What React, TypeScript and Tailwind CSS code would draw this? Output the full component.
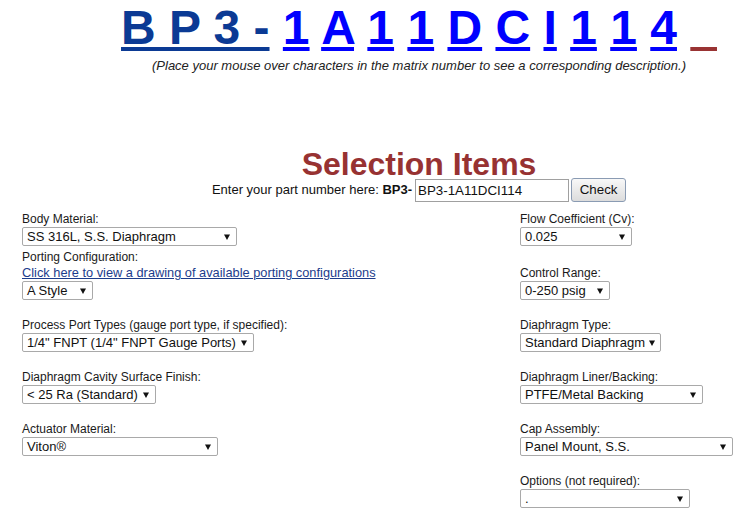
import React from "react";

const matrix = ["1", "A", "1", "1", "D", "C", "I", "1", "1", "4"];

interface PickProps {
  label: string;
  value: string;
  width: string;
  children?: React.ReactNode;
}

const Arrow = () => (
  <svg width="6" height="6" viewBox="0 0 6 6" className="ml-[4px] shrink-0">
    <polygon points="0,0.5 6,0.5 3,6" fill="#111" />
  </svg>
);

const Pick = ({ label, value, width, children }: PickProps) => {
  return (
    <div>
      <span className="block text-[12px] leading-[16px] text-[#1a1a1a]">{label}</span>
      {children}
      <div
        className={`${width} flex h-[19px] items-center justify-between rounded-[2px] border border-[#a9a9a9] bg-white pl-[4px] pr-[6px] text-[13px] leading-none text-[#111]`}
      >
        <span className="whitespace-nowrap">{value}</span>
        <Arrow />
      </div>
    </div>
  );
};

export default function App() {
  return (
    <div className="w-[743px] h-[519px] overflow-hidden bg-white font-['Liberation_Sans',Arial,sans-serif]">
      <div className="w-[838px]">
        <div className="text-center text-[48px] font-bold leading-[55px] whitespace-nowrap">
          <a className="text-[#0b3a94] underline">B P 3 -</a>{" "}
          {matrix.map((c, i) => (
            <React.Fragment key={i}>
              <a className="text-[#0000ff] underline">{c}</a>{" "}
            </React.Fragment>
          ))}
          <span className="text-[#993333] underline">{"\u00a0\u00a0"}</span>
        </div>
        <p className="mt-[3px] text-center text-[13px] italic leading-[16px] text-[#222]">
          (Place your mouse over characters in the matrix number to see a corresponding description.)
        </p>

        <div className="h-[77px]" />

        <h1 className="text-center text-[32px] font-bold leading-[27px] text-[#973232]">
          Selection Items
        </h1>
        <div className="flex h-[24px] items-center justify-center text-[13px] text-[#111]">
          <span>Enter your part number here:&nbsp;</span>
          <b>BP3-</b>
          <input
            readOnly
            value="BP3-1A11DCI114"
            className="ml-[3px] h-[23px] w-[154px] border border-[#a0a0a0] px-[2px] text-[13.33px] text-[#111] outline-none"
          />
          <button className="ml-[2px] h-[24px] w-[55px] rounded-[3px] border border-[#8a9bb3] bg-gradient-to-b from-[#f8f8f8] to-[#dcdcdc] text-[13.33px] text-[#111]">
            Check
          </button>
        </div>

        <div className="flex flex-col pl-[22px]">
          <div className="mt-[9px] grid grid-cols-[498px_1fr] items-end">
            <Pick label="Body Material:" value="SS 316L, S.S. Diaphragm" width="w-[215px]" />
            <Pick label="Flow Coefficient (Cv):" value="0.025" width="w-[112px]" />
          </div>
          <div className="mt-[3px] grid grid-cols-[498px_1fr] items-end">
            <Pick label="Porting Configuration:" value="A Style" width="w-[71px]">
              <a className="block text-[12.8px] leading-[16px] text-[#1c3c8c] underline">
                Click here to view a drawing of available porting configurations
              </a>
            </Pick>
            <Pick label="Control Range:" value="0-250 psig" width="w-[90px]" />
          </div>
          <div className="mt-[17px] grid grid-cols-[498px_1fr] items-end">
            <Pick
              label="Process Port Types (gauge port type, if specified):"
              value={'1/4" FNPT (1/4" FNPT Gauge Ports)'}
              width="w-[232px]"
            />
            <Pick label="Diaphragm Type:" value="Standard Diaphragm" width="w-[141px]" />
          </div>
          <div className="mt-[17px] grid grid-cols-[498px_1fr] items-end">
            <Pick label="Diaphragm Cavity Surface Finish:" value="< 25 Ra (Standard)" width="w-[134px]" />
            <Pick label="Diaphragm Liner/Backing:" value="PTFE/Metal Backing" width="w-[183px]" />
          </div>
          <div className="mt-[17px] grid grid-cols-[498px_1fr] items-end">
            <Pick label="Actuator Material:" value="Viton®" width="w-[196px]" />
            <Pick label="Cap Assembly:" value="Panel Mount, S.S." width="w-[213px]" />
          </div>
          <div className="mt-[17px] grid grid-cols-[498px_1fr] items-end">
            <div />
            <Pick label="Options (not required):" value="." width="w-[170px]" />
          </div>
        </div>
      </div>
    </div>
  );
}
